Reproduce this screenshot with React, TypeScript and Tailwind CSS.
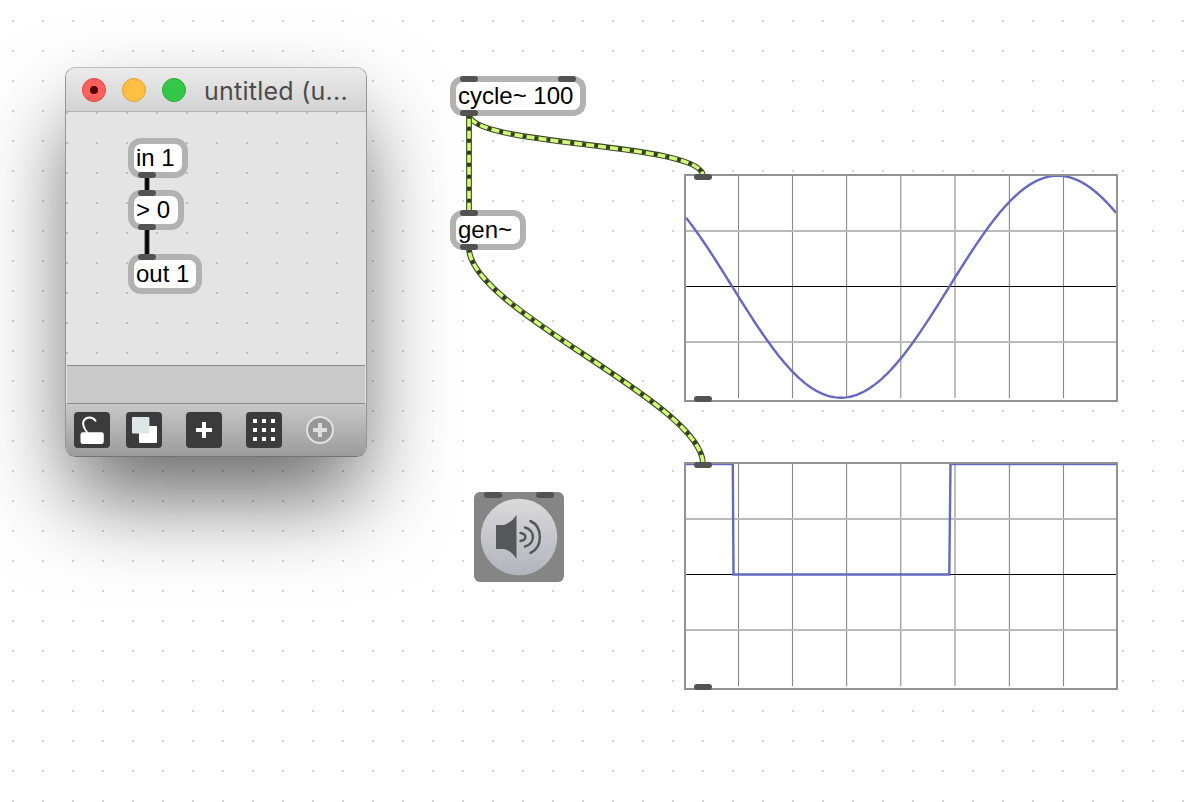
import type { ReactNode } from 'react';

const Port = () => <span className="block h-[6px] w-[18px] rounded-full bg-[#535353]" />;

function Ports({ count }: { count: number }) {
  return (
    <div className="flex h-[6px] shrink-0 justify-between px-[10px]">
      {Array.from({ length: count }, (_, i) => <Port key={i} />)}
    </div>
  );
}

function PatchObject({ className, children, inlets = 0, outlets = 0 }: {
  className: string;
  children: ReactNode;
  inlets?: number;
  outlets?: number;
}) {
  return (
    <div className={`absolute flex h-10 flex-col rounded-[13px] bg-[#b2b2b2] ${className}`}>
      <Ports count={inlets} />
      <div className="mx-[6px] flex h-7 items-center rounded-[7px] bg-white pl-[2px] text-[24px] leading-7 whitespace-nowrap text-black">
        {children}
      </div>
      <Ports count={outlets} />
    </div>
  );
}

const columns = [52.5, 106.5, 160.6, 214.8, 269, 323.4, 377.5];

function Scope({ className, trace }: { className: string; trace: string }) {
  return (
    <div className={`absolute grid h-[228px] w-[434px] bg-white ${className}`}>
      <div className="col-start-1 row-start-1 border-2 border-[#929292]">
        <svg width="430" height="224" viewBox="0 0 430 224" className="block" fill="none">
          {columns.map((x) => (
            <path key={x} d={`M${x} 0V222`} stroke="#898989" strokeWidth="1.1" />
          ))}
          <path d="M0 55H430M0 166H430" stroke="#bababa" strokeWidth="2" />
          <path d="M0 110.5H430" stroke="#000" />
          <path d={trace} stroke="#6468bf" strokeWidth="2.4" />
        </svg>
      </div>
      <div className="z-10 col-start-1 row-start-1 flex flex-col justify-between">
        <Ports count={1} />
        <Ports count={1} />
      </div>
    </div>
  );
}

const sine = Array.from({ length: 216 }, (_, i) => {
  const x = i * 2;
  const y = 110.7 - 111 * Math.cos((2 * Math.PI * (x - 371.8)) / 434);
  return `${i ? 'L' : 'M'}${x} ${y.toFixed(2)}`;
}).join('');

const cords = [
  'M469 114C469 147 703 142 703 176',
  'M469 114V212',
  'M469 248C469 309 703 403 703 464',
];

function ToolButton({ children }: { children: ReactNode }) {
  return (
    <button className="size-9 rounded-[4px] bg-[#3b3b3b]">
      <svg width="36" height="36" viewBox="0 0 36 36" fill="none">{children}</svg>
    </button>
  );
}

function PatchWindow() {
  return (
    <section className="absolute top-[67px] left-[65px] h-[390px] w-[302px] rounded-[10px] shadow-[0_46px_90px_-6px_rgba(0,0,0,0.6)]">
      <div className="flex h-full flex-col overflow-hidden rounded-[10px] border border-[#969696] border-t-[#bdbdbd] border-b-[#747474] bg-[#e4e4e4]">
        <header className="flex h-11 shrink-0 items-center gap-[18px] border-b border-[#b0b0b0] bg-linear-to-b from-[#ebebeb] to-[#d3d3d3] pl-4">
          <div className="flex gap-4">
            <span className="flex size-6 items-center justify-center rounded-full border border-[#e0443e] bg-[#ff605c]">
              <span className="size-2 rounded-full bg-[#4d0000]" />
            </span>
            <span className="size-6 rounded-full border border-[#dea236] bg-[#ffbf43]" />
            <span className="size-6 rounded-full border border-[#27aa35] bg-[#34c84a]" />
          </div>
          <h1 className="pt-[2px] font-['Inter'] text-[25px] leading-[30px] tracking-[0.25px] whitespace-nowrap text-[#4c4c4c]">untitled (u...</h1>
        </header>
        <div className="relative h-[253px] shrink-0">
          <svg width="300" height="253" className="block">
            <defs>
              <pattern id="inner-dots" width="30" height="30" patternUnits="userSpaceOnUse">
                <rect width="2" height="2" fill="#bcbcbc" />
              </pattern>
            </defs>
            <rect width="300" height="253" fill="url(#inner-dots)" />
            <path d="M81 64V80M81 116V144" stroke="#3c3c3c" strokeWidth="5" />
            <path d="M81 64V80M81 116V144" stroke="#000" strokeWidth="3" />
          </svg>
          <PatchObject className="top-[26px] left-[62px] w-[60px]" outlets={1}>in 1</PatchObject>
          <PatchObject className="top-[78px] left-[62px] w-[56px]" inlets={1} outlets={1}>&gt; 0</PatchObject>
          <PatchObject className="top-[142px] left-[62px] w-[74px]" inlets={1}>out 1</PatchObject>
        </div>
        <div className="mx-px h-[39px] shrink-0 border-y border-[#8a8a8a] bg-[#c9c9c9]" />
        <footer className="flex min-h-0 flex-1 items-center gap-6 bg-linear-to-b from-[#c8c8c8] to-[#9b9b9b] pl-2">
          <div className="flex gap-4">
            <ToolButton>
              <path d="M13.500 21C9.500 15.500 8 11.500 9.800 8.400C12.500 4.500 18.500 4.300 21.500 8.700" stroke="#fff" strokeWidth="2" strokeLinecap="round" />
              <rect x="6.500" y="20.300" width="23.300" height="11.700" rx="2.300" fill="#fff" />
            </ToolButton>
            <ToolButton>
              <rect x="13" y="14" width="18" height="17" rx="1" fill="#fff" />
              <rect x="6" y="5" width="17.400" height="16.500" rx="1" fill="#dfe6e6" />
            </ToolButton>
          </div>
          <ToolButton>
            <path d="M18 10V26M10 18H26" stroke="#fff" strokeWidth="4" />
          </ToolButton>
          <ToolButton>
            {[7, 16, 25].map((y) => [7, 16, 25].map((x) => (
              <rect key={`${x}-${y}`} x={x} y={y} width="4" height="4" fill="#fff" />
            )))}
          </ToolButton>
          <svg width="28" height="28" viewBox="0 0 28 28" fill="none">
            <circle cx="14" cy="14" r="13" fill="#989898" stroke="#e2e2e2" strokeWidth="2" />
            <path d="M14 7V21M7 14H21" stroke="#dedede" strokeWidth="4" />
          </svg>
        </footer>
      </div>
    </section>
  );
}

export default function App() {
  return (
    <main className="relative h-[802px] w-[1190px] overflow-hidden bg-white font-['Liberation_Sans',Arial,sans-serif]">
      <svg width="1190" height="802" className="block" fill="none">
        <defs>
          <pattern id="canvas-dots" x="12" y="20" width="30" height="30" patternUnits="userSpaceOnUse">
            <rect width="2" height="2" fill="#d4d4d4" />
          </pattern>
        </defs>
        <rect width="1190" height="802" fill="url(#canvas-dots)" />
        {cords.map((d) => (
          <g key={d}>
            <path d={d} stroke="#3f4a2a" strokeWidth="5.800" />
            <path d={d} stroke="#d3fb7b" strokeWidth="3.600" />
            <path d={d} stroke="#343f1e" strokeWidth="4" strokeDasharray="4 8" strokeDashoffset="-0.700" />
          </g>
        ))}
      </svg>
      <PatchWindow />

      <PatchObject className="top-[76px] left-[450px] w-[136px]" inlets={2} outlets={1}>cycle~ 100</PatchObject>
      <PatchObject className="top-[210px] left-[450px] w-[76px]" inlets={1} outlets={1}>gen~</PatchObject>
      <Scope className="top-[174px] left-[684px]" trace={sine} />
      <Scope className="top-[462px] left-[684px]" trace="M0 0H46.800L47.500 110.500H263.300L264.500 0H430" />

      <button className="absolute top-[492px] left-[474px] flex size-[90px] flex-col rounded-[6px] bg-[#858585]">
        <Ports count={2} />
        <svg width="90" height="84" viewBox="0 6 90 84" fill="none">
          <defs>
            <linearGradient id="dial" x2="0" y2="1">
              <stop stopColor="#dadada" />
              <stop offset="1" stopColor="#b3b3bd" />
            </linearGradient>
          </defs>
          <circle cx="45" cy="45" r="38.300" fill="url(#dial)" />
          <path d="M23 33H30Q38 30 42.500 23V67Q38 59 30 57H23Q22 57 22 56V34Q22 33 23 33Z" fill="#565758" />
          <path d="M46.500 41C53 42 53 48 46.500 49M51 35.500C61.500 38 61.500 52 51 54.500M56.500 29C69 35 69 55 56.500 61" stroke="#565758" strokeWidth="2.500" strokeLinecap="round" />
        </svg>
      </button>
    </main>
  );
}
